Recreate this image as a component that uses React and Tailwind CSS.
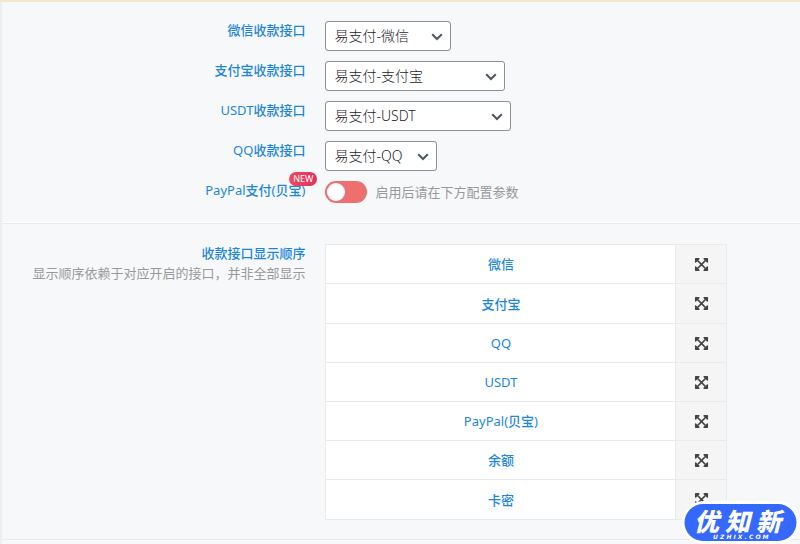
import React, { useState } from 'react';
import { FaExpandArrowsAlt } from 'react-icons/fa';

const GATEWAYS = [
  { id: 'wechat', label: '微信收款接口', value: '易支付-微信', width: 'w-[126px]' },
  { id: 'alipay', label: '支付宝收款接口', value: '易支付-支付宝', width: 'w-[180px]' },
  { id: 'usdt', label: 'USDT收款接口', value: '易支付-USDT', width: 'w-[186px]' },
  { id: 'qq', label: 'QQ收款接口', value: '易支付-QQ', width: 'w-[112px]' },
];

const ORDER = ['微信', '支付宝', 'QQ', 'USDT', 'PayPal(贝宝)', '余额', '卡密'];

// Chinese runs are heavier, latin runs keep the regular weight
function MixedText({ text }) {
  return text.split(/([\u4e00-\u9fff]+)/).filter(Boolean).map((part, i) => (
    <span key={i} className={/[\u4e00-\u9fff]/.test(part) ? "font-['Noto_Sans_CJK_SC',sans-serif] font-medium" : 'font-normal'}>{part}</span>
  ));
}

function Row({ children }) {
  return <div className="grid grid-cols-[39fr_61fr] gap-x-5">{children}</div>;
}

function GatewaySelect({ id, value, width }) {
  return (
    <div className={`relative mt-px ${width}`}>
      <select id={id} defaultValue={value} className="block h-[30px] w-full appearance-none rounded-[3px] border border-[#8c8f94] bg-white pl-2 pr-6 text-sm font-light text-[#1d2327]">
        <option value={value}>{value}</option>
      </select>
      <svg className="pointer-events-none absolute right-2 top-[11px] h-[10px] w-3" viewBox="0 0 12 10" fill="none" stroke="#50575e" strokeWidth="2">
        <path d="M1.2 2.2 6 7l4.800-4.800" />
      </svg>
    </div>
  );
}

function SiteLogo() {
  return (
    <svg className="absolute bottom-0 right-0 h-[43px] w-[118px]" viewBox="0 0 118 43" role="img" aria-label="优知新">
      <rect x="0" y="0" width="118" height="43" rx="21.500" fill="#fff" />
      <rect x="2.500" y="3" width="112" height="37" rx="18.500" fill="#3568fd" />
      <g fill="#fff" fontFamily="'Noto Sans CJK SC', sans-serif" fontWeight="900" fontStyle="italic" fontSize="25">
        <text x="12" y="30">优</text>
        <text x="43" y="30">知</text>
        <text x="74" y="30">新</text>
      </g>
      <text x="31" y="38" fill="#fff" fontFamily="'DejaVu Sans', sans-serif" fontWeight="700" fontStyle="italic" fontSize="6">U Z H I X . C O M</text>
    </svg>
  );
}

export default function App() {
  const [paypal, setPaypal] = useState(false);

  return (
    <div className="relative overflow-hidden border-t-2 border-[#f6e7cb] bg-[#f6f8fa] font-['Noto_Sans','Noto_Sans_CJK_SC',sans-serif] text-[13px] leading-5 text-[#1e87dc]">
      <div className="border-l-2 border-[#eceef1]">
        <section className="flex flex-col gap-[9px] pb-5 pt-[18px]">
          {GATEWAYS.map((g) => (
            <Row key={g.id}>
              <label htmlFor={g.id} className="text-right">
                <MixedText text={g.label} />
              </label>
              <GatewaySelect id={g.id} value={g.value} width={g.width} />
            </Row>
          ))}
          <Row>
            <label htmlFor="paypal" className="relative text-right">
              <MixedText text="PayPal支付(贝宝)" />
              <span className="absolute -right-3 -top-2 rounded-full bg-gradient-to-r from-[#f0495f] to-[#e0305c] px-1 text-[9px] leading-[14px] text-white">NEW</span>
            </label>
            <div className="mt-px flex items-center gap-2">
              <input
                id="paypal"
                type="checkbox"
                role="switch"
                checked={paypal}
                onChange={(e) => setPaypal(e.target.checked)}
                className="h-[22px] w-[42px] appearance-none rounded-full bg-[#ed6f6f] p-[2px] before:block before:size-[18px] before:rounded-full before:bg-white checked:bg-[#1e87dc] checked:before:ml-auto"
              />
              <span className="text-[#999]">启用后请在下方配置参数</span>
            </div>
          </Row>
        </section>

        <section className="border-b border-t border-[#e8e9eb] pb-[19px] pt-[19px] shadow-[0_-1px_0_#fff]">
          <Row>
            <div className="text-right">
              <h4><MixedText text="收款接口显示顺序" /></h4>
              <p className="text-[#999]">显示顺序依赖于对应开启的接口，并非全部显示</p>
            </div>
            <ul className="mt-px w-full max-w-[402px] border border-[#e8eaec] bg-white">
              {ORDER.map((name) => (
                <li key={name} className="flex h-[39px] border-b border-[#e8eaec] last:border-b-0 nth-2:h-10">
                  <span className="flex flex-1 items-center justify-center"><span><MixedText text={name} /></span></span>
                  <button type="button" aria-label={`移动 ${name}`} className="flex w-[51px] cursor-move items-center justify-center border-l border-[#e8eaec] bg-[#f5f5f5] text-[#444]">
                    <FaExpandArrowsAlt size={15} />
                  </button>
                </li>
              ))}
            </ul>
          </Row>
        </section>
        <div className="h-1" />
      </div>
      <SiteLogo />
    </div>
  );
}
